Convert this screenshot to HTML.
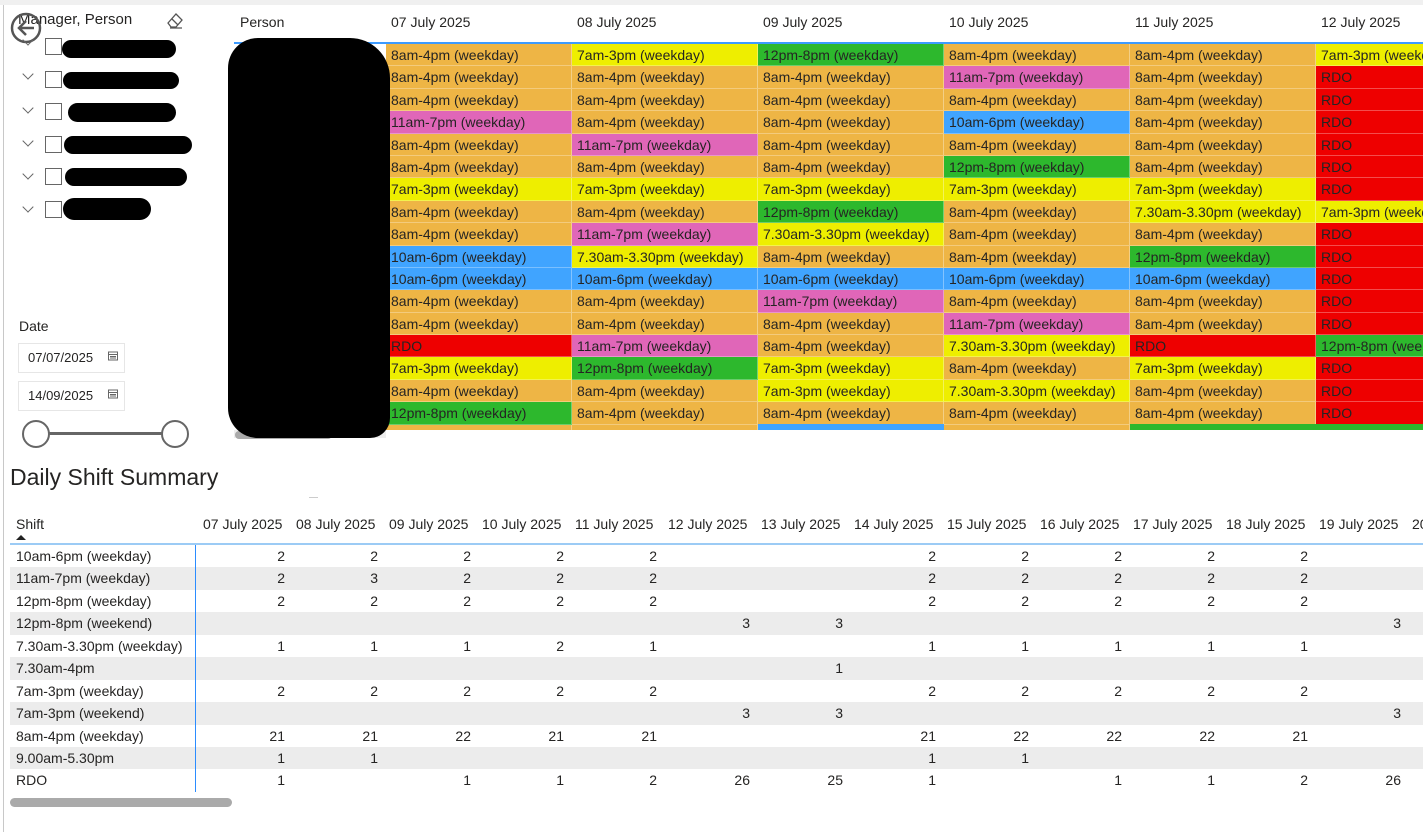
<!DOCTYPE html>
<html><head><meta charset="utf-8"><style>
*{box-sizing:border-box;margin:0;padding:0}
body{width:1423px;height:832px;overflow:hidden;background:#fff;font-family:"Liberation Sans",sans-serif;color:#252423;position:relative}
.abs{position:absolute}
.topbar{left:0;top:0;width:1423px;height:5px;background:#f0f0f0}
.lline{left:3px;top:5px;width:1px;height:827px;background:#c8c8c8}
.g{position:absolute;left:386px;top:44px;width:1037px;height:386px;overflow:hidden;display:grid;grid-template-columns:186px 186px 186px 186px 186px 186px;grid-auto-rows:22.4px}
.g div{font-size:14px;line-height:22px;padding-left:5px;white-space:nowrap;overflow:hidden;border-right:1px solid rgba(255,255,255,.35);border-bottom:1px solid rgba(255,255,255,.3)}
.O{background:#eeb545}.Y{background:#eeee00}.G{background:#2db82d}.P{background:#e066b8}.B{background:#40a4ff}.R{background:#ee0000}
.hd{top:14px;font-size:14px}
.t{position:absolute;left:10px;top:545px;display:grid;grid-template-columns:186px repeat(13,93px) 30px;grid-auto-rows:22.45px;font-size:14px;width:1413px;overflow:hidden}
.t div{line-height:22px;text-align:right;padding-right:4px;white-space:nowrap}
.t div.n{text-align:left;padding-left:6px;border-right:1px solid #2b8cff}
.t .z{background:#ececec}
.th{top:516px;font-size:14px}
.blob{background:#000;border-radius:24px}
.cb{width:17px;height:17px;border:1px solid #666;background:#fff}
.chev{width:8px;height:8px;border-right:1.3px solid #666;border-bottom:1.3px solid #666;transform:rotate(45deg)}
.date{width:107px;height:30px;border:1px solid #e6e6e6;font-size:13px;line-height:28px;padding-left:9px}
</style></head><body>
<div class="abs topbar"></div>
<div class="abs lline"></div>

<div class="abs" style="left:18px;top:11px;font-size:15px">Manager, Person</div>
<svg class="abs" style="left:164px;top:11px" width="22" height="18" viewBox="0 0 22 18"><path d="M4 12 L12 3 L18 9 L12 16 L7 16 Z M8 8 L14 14 M6 17 H18" fill="none" stroke="#555" stroke-width="1.3"/></svg>
<svg class="abs" style="left:9px;top:11px" width="35" height="35" viewBox="0 0 35 35"><circle cx="17" cy="17" r="14" fill="none" stroke="#555" stroke-width="2.5"/><path d="M25 17 H11 M17 10 L10 17 L17 24" fill="none" stroke="#555" stroke-width="2.5"/></svg>

<div class="abs chev" style="left:24px;top:36px"></div><div class="abs cb" style="left:45px;top:38px"></div><div class="abs blob" style="left:62px;top:40px;width:114px;height:18px"></div>
<div class="abs chev" style="left:24px;top:70px"></div><div class="abs cb" style="left:45px;top:71px"></div><div class="abs blob" style="left:63px;top:72px;width:116px;height:17px"></div>
<div class="abs chev" style="left:24px;top:104px"></div><div class="abs cb" style="left:45px;top:103px"></div><div class="abs blob" style="left:68px;top:103px;width:108px;height:19px"></div>
<div class="abs chev" style="left:24px;top:137px"></div><div class="abs cb" style="left:45px;top:136px"></div><div class="abs blob" style="left:64px;top:136px;width:128px;height:18px"></div>
<div class="abs chev" style="left:24px;top:170px"></div><div class="abs cb" style="left:45px;top:168px"></div><div class="abs blob" style="left:65px;top:168px;width:122px;height:18px"></div>
<div class="abs chev" style="left:24px;top:203px"></div><div class="abs cb" style="left:45px;top:201px"></div><div class="abs blob" style="left:63px;top:198px;width:88px;height:22px"></div>

<div class="abs" style="left:19px;top:318px;font-size:14px">Date</div>
<div class="abs date" style="left:18px;top:343px">07/07/2025</div>
<div class="abs date" style="left:18px;top:381px">14/09/2025</div>
<svg class="abs" style="left:108px;top:351px" width="10" height="10"><rect x="0.5" y="1" width="9" height="8" fill="none" stroke="#666"/><path d="M1 3.5H9M2 5.5H8M2 7H8" stroke="#666"/></svg>
<svg class="abs" style="left:108px;top:389px" width="10" height="10"><rect x="0.5" y="1" width="9" height="8" fill="none" stroke="#666"/><path d="M1 3.5H9M2 5.5H8M2 7H8" stroke="#666"/></svg>
<div class="abs" style="left:48px;top:432px;width:115px;height:3px;background:#666"></div>
<div class="abs" style="left:22px;top:420px;width:28px;height:28px;border-radius:50%;border:2px solid #666;background:#fff"></div>
<div class="abs" style="left:161px;top:420px;width:28px;height:28px;border-radius:50%;border:2px solid #666;background:#fff"></div>

<div class="abs hd" style="left:240px">Person</div>
<div class="abs hd" style="left:391px">07 July 2025</div>
<div class="abs hd" style="left:577px">08 July 2025</div>
<div class="abs hd" style="left:763px">09 July 2025</div>
<div class="abs hd" style="left:949px">10 July 2025</div>
<div class="abs hd" style="left:1135px">11 July 2025</div>
<div class="abs hd" style="left:1321px">12 July 2025</div>
<div class="abs" style="left:234px;top:42px;width:1189px;height:2px;background:#3d9bff"></div>

<div class="g">
<div class="O">8am-4pm (weekday)</div><div class="Y">7am-3pm (weekday)</div><div class="G">12pm-8pm (weekday)</div><div class="O">8am-4pm (weekday)</div><div class="O">8am-4pm (weekday)</div><div class="Y">7am-3pm (weekday)</div>
<div class="O">8am-4pm (weekday)</div><div class="O">8am-4pm (weekday)</div><div class="O">8am-4pm (weekday)</div><div class="P">11am-7pm (weekday)</div><div class="O">8am-4pm (weekday)</div><div class="R">RDO</div>
<div class="O">8am-4pm (weekday)</div><div class="O">8am-4pm (weekday)</div><div class="O">8am-4pm (weekday)</div><div class="O">8am-4pm (weekday)</div><div class="O">8am-4pm (weekday)</div><div class="R">RDO</div>
<div class="P">11am-7pm (weekday)</div><div class="O">8am-4pm (weekday)</div><div class="O">8am-4pm (weekday)</div><div class="B">10am-6pm (weekday)</div><div class="O">8am-4pm (weekday)</div><div class="R">RDO</div>
<div class="O">8am-4pm (weekday)</div><div class="P">11am-7pm (weekday)</div><div class="O">8am-4pm (weekday)</div><div class="O">8am-4pm (weekday)</div><div class="O">8am-4pm (weekday)</div><div class="R">RDO</div>
<div class="O">8am-4pm (weekday)</div><div class="O">8am-4pm (weekday)</div><div class="O">8am-4pm (weekday)</div><div class="G">12pm-8pm (weekday)</div><div class="O">8am-4pm (weekday)</div><div class="R">RDO</div>
<div class="Y">7am-3pm (weekday)</div><div class="Y">7am-3pm (weekday)</div><div class="Y">7am-3pm (weekday)</div><div class="Y">7am-3pm (weekday)</div><div class="Y">7am-3pm (weekday)</div><div class="R">RDO</div>
<div class="O">8am-4pm (weekday)</div><div class="O">8am-4pm (weekday)</div><div class="G">12pm-8pm (weekday)</div><div class="O">8am-4pm (weekday)</div><div class="Y">7.30am-3.30pm (weekday)</div><div class="Y">7am-3pm (weekday)</div>
<div class="O">8am-4pm (weekday)</div><div class="P">11am-7pm (weekday)</div><div class="Y">7.30am-3.30pm (weekday)</div><div class="O">8am-4pm (weekday)</div><div class="O">8am-4pm (weekday)</div><div class="R">RDO</div>
<div class="B">10am-6pm (weekday)</div><div class="Y">7.30am-3.30pm (weekday)</div><div class="O">8am-4pm (weekday)</div><div class="O">8am-4pm (weekday)</div><div class="G">12pm-8pm (weekday)</div><div class="R">RDO</div>
<div class="B">10am-6pm (weekday)</div><div class="B">10am-6pm (weekday)</div><div class="B">10am-6pm (weekday)</div><div class="B">10am-6pm (weekday)</div><div class="B">10am-6pm (weekday)</div><div class="R">RDO</div>
<div class="O">8am-4pm (weekday)</div><div class="O">8am-4pm (weekday)</div><div class="P">11am-7pm (weekday)</div><div class="O">8am-4pm (weekday)</div><div class="O">8am-4pm (weekday)</div><div class="R">RDO</div>
<div class="O">8am-4pm (weekday)</div><div class="O">8am-4pm (weekday)</div><div class="O">8am-4pm (weekday)</div><div class="P">11am-7pm (weekday)</div><div class="O">8am-4pm (weekday)</div><div class="R">RDO</div>
<div class="R">RDO</div><div class="P">11am-7pm (weekday)</div><div class="O">8am-4pm (weekday)</div><div class="Y">7.30am-3.30pm (weekday)</div><div class="R">RDO</div><div class="G">12pm-8pm (weekday)</div>
<div class="Y">7am-3pm (weekday)</div><div class="G">12pm-8pm (weekday)</div><div class="Y">7am-3pm (weekday)</div><div class="O">8am-4pm (weekday)</div><div class="Y">7am-3pm (weekday)</div><div class="R">RDO</div>
<div class="O">8am-4pm (weekday)</div><div class="O">8am-4pm (weekday)</div><div class="Y">7am-3pm (weekday)</div><div class="Y">7.30am-3.30pm (weekday)</div><div class="O">8am-4pm (weekday)</div><div class="R">RDO</div>
<div class="G">12pm-8pm (weekday)</div><div class="O">8am-4pm (weekday)</div><div class="O">8am-4pm (weekday)</div><div class="O">8am-4pm (weekday)</div><div class="O">8am-4pm (weekday)</div><div class="R">RDO</div>
<div class="O"></div><div class="O"></div><div class="B"></div><div class="O"></div><div class="G"></div><div class="R"></div>
</div>
<div class="abs" style="left:758px;top:424px;width:186px;height:6px;background:#40a4ff"></div>
<div class="abs" style="left:1130px;top:424px;width:293px;height:6px;background:#2db82d"></div>

<div class="abs" style="left:234px;top:430px;width:152px;height:8px;background:#eee"></div>
<div class="abs" style="left:235px;top:431px;width:97px;height:8px;border-radius:4px;background:#aaa"></div>
<div class="abs" style="left:228px;top:38px;width:162px;height:400px;background:#000;border-radius:30px 40px 20px 30px"></div>

<div class="abs" style="left:10px;top:464px;font-size:23px">Daily Shift Summary</div>
<div class="abs" style="left:309px;top:497px;width:9px;height:1px;background:#ccc"></div>

<div class="abs th" style="left:16px">Shift</div>
<div class="abs" style="left:16px;top:535px;width:0;height:0;border-left:5px solid transparent;border-right:5px solid transparent;border-bottom:5px solid #222"></div>
<div class="abs th" style="left:203px">07 July 2025</div>
<div class="abs th" style="left:296px">08 July 2025</div>
<div class="abs th" style="left:389px">09 July 2025</div>
<div class="abs th" style="left:482px">10 July 2025</div>
<div class="abs th" style="left:575px">11 July 2025</div>
<div class="abs th" style="left:668px">12 July 2025</div>
<div class="abs th" style="left:761px">13 July 2025</div>
<div class="abs th" style="left:854px">14 July 2025</div>
<div class="abs th" style="left:947px">15 July 2025</div>
<div class="abs th" style="left:1040px">16 July 2025</div>
<div class="abs th" style="left:1133px">17 July 2025</div>
<div class="abs th" style="left:1226px">18 July 2025</div>
<div class="abs th" style="left:1319px">19 July 2025</div>
<div class="abs th" style="left:1412px">20</div>
<div class="abs" style="left:10px;top:543px;width:1413px;height:2px;background:#9ccbf5"></div>

<div class="t">
<div class="n">10am-6pm (weekday)</div><div>2</div><div>2</div><div>2</div><div>2</div><div>2</div><div></div><div></div><div>2</div><div>2</div><div>2</div><div>2</div><div>2</div><div></div><div></div>
<div class="n z">11am-7pm (weekday)</div><div class="z">2</div><div class="z">3</div><div class="z">2</div><div class="z">2</div><div class="z">2</div><div class="z"></div><div class="z"></div><div class="z">2</div><div class="z">2</div><div class="z">2</div><div class="z">2</div><div class="z">2</div><div class="z"></div><div class="z"></div>
<div class="n">12pm-8pm (weekday)</div><div>2</div><div>2</div><div>2</div><div>2</div><div>2</div><div></div><div></div><div>2</div><div>2</div><div>2</div><div>2</div><div>2</div><div></div><div></div>
<div class="n z">12pm-8pm (weekend)</div><div class="z"></div><div class="z"></div><div class="z"></div><div class="z"></div><div class="z"></div><div class="z">3</div><div class="z">3</div><div class="z"></div><div class="z"></div><div class="z"></div><div class="z"></div><div class="z"></div><div class="z">3</div><div class="z"></div>
<div class="n">7.30am-3.30pm (weekday)</div><div>1</div><div>1</div><div>1</div><div>2</div><div>1</div><div></div><div></div><div>1</div><div>1</div><div>1</div><div>1</div><div>1</div><div></div><div></div>
<div class="n z">7.30am-4pm</div><div class="z"></div><div class="z"></div><div class="z"></div><div class="z"></div><div class="z"></div><div class="z"></div><div class="z">1</div><div class="z"></div><div class="z"></div><div class="z"></div><div class="z"></div><div class="z"></div><div class="z"></div><div class="z"></div>
<div class="n">7am-3pm (weekday)</div><div>2</div><div>2</div><div>2</div><div>2</div><div>2</div><div></div><div></div><div>2</div><div>2</div><div>2</div><div>2</div><div>2</div><div></div><div></div>
<div class="n z">7am-3pm (weekend)</div><div class="z"></div><div class="z"></div><div class="z"></div><div class="z"></div><div class="z"></div><div class="z">3</div><div class="z">3</div><div class="z"></div><div class="z"></div><div class="z"></div><div class="z"></div><div class="z"></div><div class="z">3</div><div class="z"></div>
<div class="n">8am-4pm (weekday)</div><div>21</div><div>21</div><div>22</div><div>21</div><div>21</div><div></div><div></div><div>21</div><div>22</div><div>22</div><div>22</div><div>21</div><div></div><div></div>
<div class="n z">9.00am-5.30pm</div><div class="z">1</div><div class="z">1</div><div class="z"></div><div class="z"></div><div class="z"></div><div class="z"></div><div class="z"></div><div class="z">1</div><div class="z">1</div><div class="z"></div><div class="z"></div><div class="z"></div><div class="z"></div><div class="z"></div>
<div class="n">RDO</div><div>1</div><div></div><div>1</div><div>1</div><div>2</div><div>26</div><div>25</div><div>1</div><div></div><div>1</div><div>1</div><div>2</div><div>26</div><div></div>
</div>
<div class="abs" style="left:10px;top:798px;width:222px;height:9px;border-radius:5px;background:#aaa"></div>
</body></html>
